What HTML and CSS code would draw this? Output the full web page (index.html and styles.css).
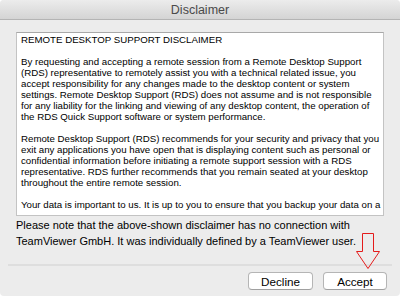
FILE: index.html
```html
<!DOCTYPE html>
<html>
<head>
  <title>Disclaimer</title>
  <link rel="stylesheet" href="styles.css">
</head>
<body>
  <div class="window">
    <div class="titlebar">Disclaimer</div>
    <div class="content">
      <div class="textbox">
        <p>REMOTE DESKTOP SUPPORT DISCLAIMER</p>
        <p>By requesting and accepting a remote session from a Remote Desktop Support<br>
        (RDS) representative to remotely assist you with a technical related issue, you<br>
        accept responsibility for any changes made to the desktop content or system<br>
        settings. Remote Desktop Support (RDS) does not assume and is not responsible<br>
        for any liability for the linking and viewing of any desktop content, the operation of<br>
        the RDS Quick Support software or system performance.</p>
        <p>Remote Desktop Support (RDS) recommends for your security and privacy that you<br>
        exit any applications you have open that is displaying content such as personal or<br>
        confidential information before initiating a remote support session with a RDS<br>
        representative. RDS further recommends that you remain seated at your desktop<br>
        throughout the entire remote session.</p>
        <p>Your data is important to us. It is up to you to ensure that you backup your data on a</p>
      </div>
      <div class="note">Please note that the above-shown disclaimer has no connection with<br>
      TeamViewer GmbH. It was individually defined by a TeamViewer user.</div>
    </div>
    <div class="separator"></div>
    <div class="buttons">
      <button class="btn">Decline</button>
      <button class="btn">Accept</button>
    </div>
    <svg class="arrow" width="28" height="40" viewBox="0 0 28 40">
      <path d="M8.5 0.5 H19.5 V18.5 H25.5 L14 35.5 L2.5 18.5 H8.5 Z" fill="none" stroke="#e41b1b" stroke-width="1"/>
    </svg>
  </div>
</body>
</html>
```

FILE: styles.css
```css
body, html {
  margin: 0;
  background: #fff;
}
.window {
  position: relative;
  width: 400px;
  height: 296px;
  background: #ececec;
  border-radius: 4px;
  overflow: hidden;
  font-family: "Liberation Sans", Arial, sans-serif;
  display: flex;
  flex-direction: column;
}
.titlebar {
  height: 19px;
  line-height: 20px;
  text-align: center;
  font-size: 12.5px;
  color: #4a4a4a;
  background: linear-gradient(#ececec, #d4d4d4);
  border-bottom: 1px solid #b4b4b4;
}
.content {
  padding: 12px 16px 0 16px;
}
.textbox {
  box-sizing: border-box;
  height: 184px;
  background: #fff;
  border: 1px solid #c3c3c3;
  border-top-color: #a8a8a8;
  padding: 1px 0 0 4px;
  overflow: hidden;
  font-size: 9.7px;
  line-height: 11px;
  color: #000;
  white-space: nowrap;
}
.textbox p {
  margin: 0 0 11px 0;
}
.note {
  margin-top: 1px;
  font-size: 11px;
  line-height: 16px;
  color: #000;
  white-space: nowrap;
}
.separator {
  margin: 15px 8px 0 8px;
  height: 2px;
  background: #dedede;
}
.buttons {
  display: flex;
  justify-content: flex-end;
  gap: 10px;
  padding: 6px 13px 0 0;
}
.btn {
  font-family: "Liberation Sans", Arial, sans-serif;
  font-size: 11.7px;
  height: 18px;
  padding: 0;
  background: #fff;
  border: 1px solid #b5b5b5;
  border-bottom-color: #a0a0a0;
  border-radius: 4px;
  color: #000;
}
.btn:first-child {
  width: 65px;
}
.btn:last-child {
  width: 64px;
}
.arrow {
  position: absolute;
  left: 354px;
  top: 233px;
}
```
